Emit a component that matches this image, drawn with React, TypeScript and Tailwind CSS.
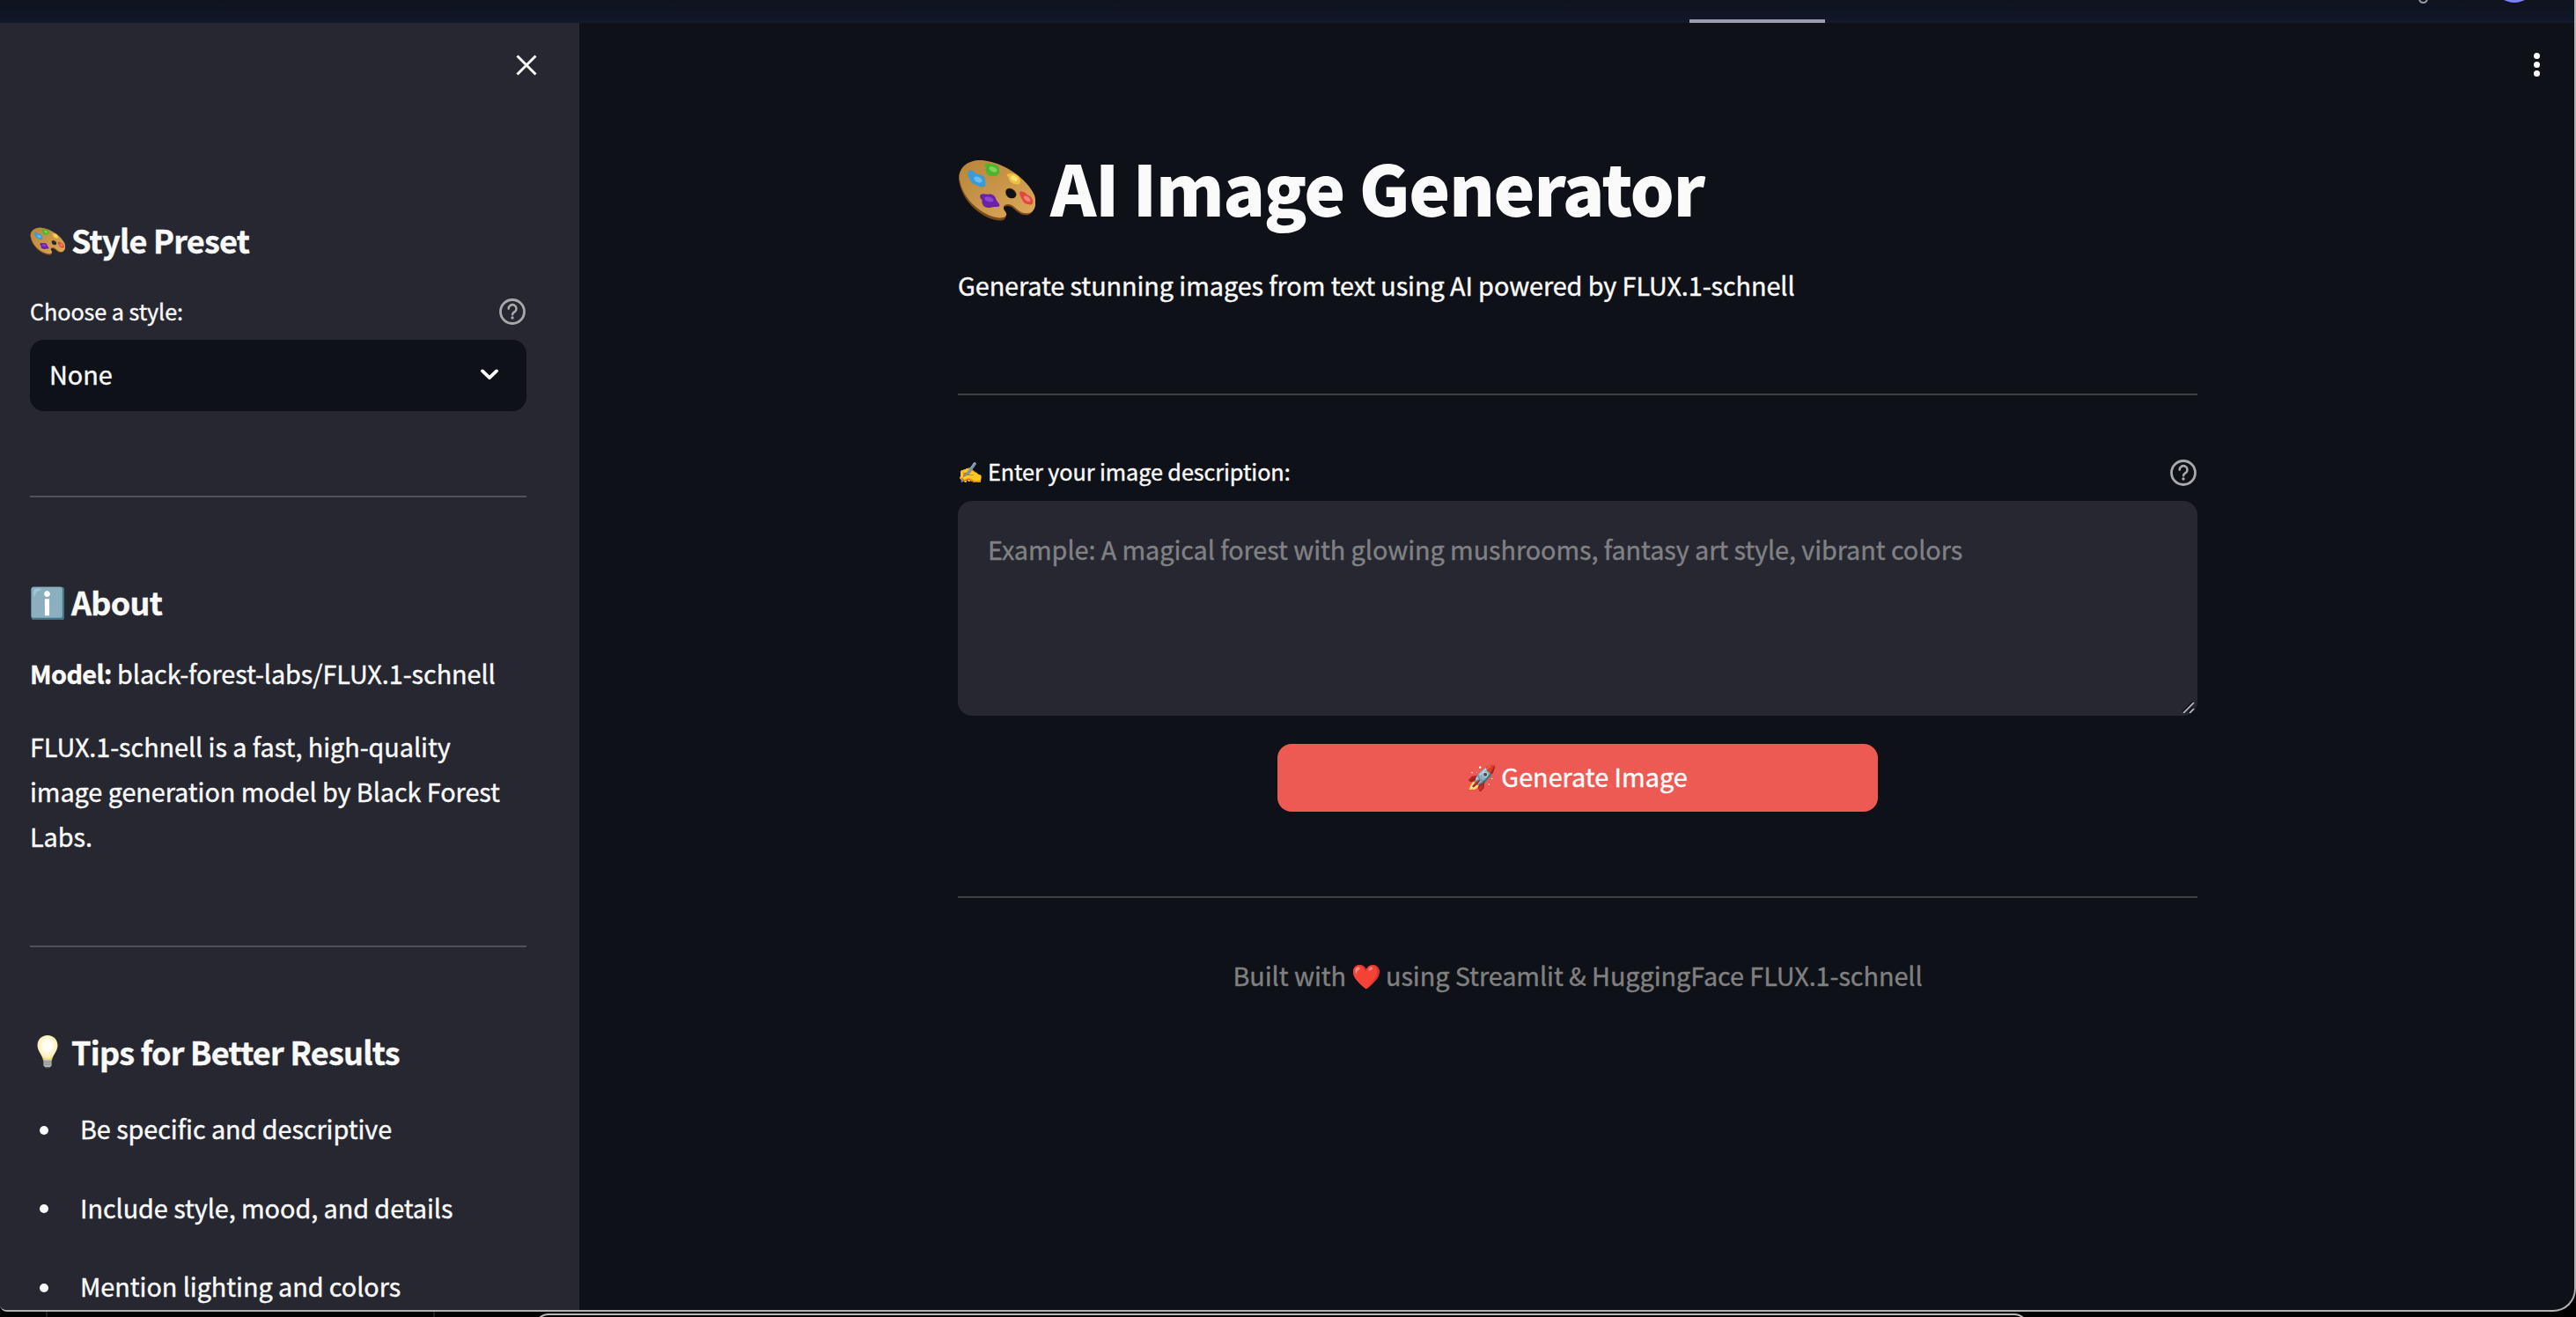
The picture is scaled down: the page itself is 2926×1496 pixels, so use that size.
import React from "react";

const tips = [
  "Be specific and descriptive",
  "Include style, mood, and details",
  "Mention lighting and colors",
];

const PaletteIcon: React.FC<{ className?: string }> = ({ className }) => (
  <svg viewBox="24 3 264 264" className={className} role="img" aria-label="🎨" stroke="none">
    <defs>
      <linearGradient id="wood" x1="0" y1="0" x2="1" y2="1">
        <stop offset="0" stopColor="#b98537" />
        <stop offset="0.5" stopColor="#c8954a" />
        <stop offset="1" stopColor="#e0ab5c" />
      </linearGradient>
    </defs>
    <path
      transform="translate(-2 6)"
      fill="#7a4a18"
      fillRule="evenodd"
      d="M30 100C22 58 62 28 112 34C182 42 258 95 281 152C293 186 283 214 258 214C228 214 217 183 196 183C176 183 176 198 187 211C195 224 184 236 162 232C108 226 42 170 30 100ZM190 136C190 150 200 157 210 157C222 157 226 148 223 140C219 130 209 124 202 124C193 124 190 129 190 136Z"
    />
    <path
      fill="url(#wood)"
      fillRule="evenodd"
      d="M30 100C22 58 62 28 112 34C182 42 258 95 285 152C295 186 285 214 258 214C228 214 217 183 196 183C176 183 176 198 187 209C195 222 184 232 162 229C108 222 42 170 30 100ZM186 140C186 156 198 163 209 163C222 163 226 152 223 144C219 134 209 128 200 128C191 128 186 133 186 140Z"
    />
    <path
      fill="#3b9ad8"
      d="M62 69C68 64 78 69 84 78C96 80 110 84 116 94C120 104 116 114 118 120C112 128 94 124 86 116C76 116 66 106 64 96C56 90 57 74 62 69Z"
    />
    <ellipse cx="93" cy="99" rx="15" ry="9" transform="rotate(25 93 99)" fill="#6cbcec" />
    <path
      fill="#4cb52c"
      d="M116 47C122 42 134 46 140 46C154 46 166 56 165 68C168 80 158 86 148 87C138 90 124 84 121 74C116 66 120 62 121 57C114 54 113 50 116 47Z"
    />
    <ellipse cx="144" cy="64" rx="14" ry="8" transform="rotate(25 144 64)" fill="#7bd655" />
    <path
      fill="#eec13b"
      d="M193 80C202 76 220 78 230 88C236 96 240 110 234 114C224 118 204 112 201 102C196 97 196 92 198 90C190 88 189 83 193 80Z"
    />
    <ellipse cx="216" cy="95" rx="13" ry="8" transform="rotate(30 216 95)" fill="#fbdf70" />
    <path
      fill="#e2483d"
      d="M236 140C244 138 254 142 258 149C268 152 280 162 280 174C281 184 274 186 262 183C252 182 244 172 242 164C236 156 232 144 236 140Z"
    />
    <ellipse cx="260" cy="164" rx="13" ry="7" transform="rotate(40 260 164)" fill="#f58476" />
    <path
      fill="#6c22a8"
      d="M101 151C108 144 120 150 128 149C140 146 152 154 154 166C158 176 168 182 166 189C160 194 150 190 142 193C130 198 112 194 108 182C104 176 108 172 106 168C100 164 97 156 101 151Z"
    />
    <ellipse cx="130" cy="166" rx="16" ry="8" transform="rotate(15 130 166)" fill="#8e45cc" />
  </svg>
);

const BulbIcon = () => (
  <svg viewBox="0 0 40 40" className="mt-0.5 h-10 w-10" role="img" aria-label="💡" stroke="none">
    <defs>
      <radialGradient id="glow" cx="0.5" cy="0.42" r="0.6">
        <stop offset="0.3" stopColor="#fffef6" />
        <stop offset="0.75" stopColor="#fbf0b8" />
        <stop offset="1" stopColor="#e8cc62" />
      </radialGradient>
    </defs>
    <path fill="url(#glow)" d="M20 1C26.8 1 31.5 6 31.5 12.6C31.5 19 26 23 25 29.5H15C14 23 8.5 19 8.5 12.6C8.5 6 13.2 1 20 1Z" />
    <path fill="#b4b4b4" d="M15.4 29H24.6V35.5L22.5 37.5H17.5L15.4 35.5Z" />
    <path stroke="#84868a" d="M15.4 31.3H24.6M15.4 34H24.6" />
    <path fill="#3a3a3d" d="M17.5 37.5H22.5L21.5 39H18.5Z" />
  </svg>
);

const HelpIcon = () => (
  <svg viewBox="0 0 30 30" fill="none" className="mt-0.5 h-[30px] w-[30px] text-[#a8a9ac]">
    <circle cx="15" cy="15" r="13.5" stroke="currentColor" strokeWidth="2.8" />
    <path
      d="M10.7 11.6a4.4 4.4 0 1 1 6.9 3.6c-1.6 1-2.5 1.6-2.5 3.1"
      stroke="currentColor"
      strokeWidth="2.6"
      strokeLinecap="round"
    />
    <circle cx="15" cy="22" r="1.7" fill="currentColor" />
  </svg>
);

const SidebarHeading: React.FC<{ icon: React.ReactNode; title: string }> = ({ icon, title }) => (
  <h3 className="flex h-12 items-center gap-[7px] text-[36px] leading-[48px] font-bold tracking-[-0.75px]">
    <span className="flex w-10 justify-center text-[34px] tracking-normal">{icon}</span>
    {title}
  </h3>
);

const Sidebar = () => (
  <aside className="h-full w-[658px] shrink-0 overflow-hidden bg-[#262730] pr-[60px] pl-[34px]">
    <div className="-mr-3 flex h-[222px] justify-end pt-9">
      <svg viewBox="0 0 24 24" className="h-6 w-6" stroke="#fafafa" strokeWidth="3">
        <path d="M1.5 1.5 22.5 22.5M22.5 1.5 1.5 22.5" />
      </svg>
    </div>

    <SidebarHeading icon={<PaletteIcon className="mt-1 h-10 w-10" />} title="Style Preset" />
    <div className="mt-9 flex h-[42px] items-center justify-between pr-px text-[25.2px] leading-[42px]">
      <span className="tracking-[-0.07px]">Choose a style:</span>
      <HelpIcon />
    </div>
    <div className="mt-3 flex h-[81px] items-center justify-between rounded-2xl bg-[#0e1117] pr-8 pb-[5px] pl-[22px]">
      <span>None</span>
      <svg viewBox="0 0 20 13" fill="none" className="mt-[3px] h-[13px] w-5" stroke="#fafafa" strokeWidth="3.8">
        <path d="M2 2.4 10 10.2 18 2.4" strokeLinecap="round" strokeLinejoin="round" />
      </svg>
    </div>

    <hr className="mt-24 border-t-2 border-[#505159]" />

    <div className="mt-[94px]">
      <SidebarHeading icon="ℹ️" title="About" />
    </div>
    <p className="mt-8 tracking-[-0.06px] whitespace-nowrap">
      <strong className="font-bold tracking-[-0.6px]">Model:</strong> black-forest-labs/FLUX.1-schnell
    </p>
    <p className="mt-8 tracking-[-0.06px] whitespace-nowrap">
      FLUX.1-schnell is a fast, high-quality
      <br />
      image generation model by Black Forest
      <br />
      Labs.
    </p>

    <hr className="mt-[99px] border-t-2 border-[#505159]" />

    <div className="mt-[94px]">
      <SidebarHeading icon={<BulbIcon />} title="Tips for Better Results" />
    </div>
    <ul className="mt-[38px] flex flex-col gap-[38.5px]">
      {tips.map((tip) => (
        <li key={tip} className="flex items-center pl-[11px] tracking-[-0.06px] whitespace-nowrap">
          <span className="mt-1 mr-9 h-2.5 w-2.5 rounded-full bg-[#fafafa]" />
          {tip}
        </li>
      ))}
    </ul>
  </aside>
);

const Main = () => (
  <main className="flex-1">
    <div className="flex h-[133px] justify-end pt-[34px] pr-[39px]">
      <div className="flex flex-col gap-[3px]">
        <span className="h-[7px] w-[7px] rounded-full bg-white" />
        <span className="h-[7px] w-[7px] rounded-full bg-white" />
        <span className="h-[7px] w-[7px] rounded-full bg-white" />
      </div>
    </div>

    <div className="ml-[430px] w-[1408px]">
      <h1 className="flex h-[106px] items-center gap-[17px] text-[79.2px] leading-[106px] font-black tracking-[-1.5px] [-webkit-text-stroke:0px]">
        <PaletteIcon className="mt-2 h-[88px] w-[88px]" />
        AI Image Generator
      </h1>
      <p className="mt-[33px] tracking-[-0.08px]">
        Generate stunning images from text using AI powered by FLUX.1-schnell
      </p>

      <hr className="mt-[98px] border-t-2 border-[#3d4044]" />

      <label className="mt-[65px] flex h-[42px] items-center pr-px text-[25.2px] leading-[42px]">
        <span className="mr-1.5 flex w-7 justify-center text-[23px]">✍️</span>
        <span className="tracking-[-0.07px]">Enter your image description:</span>
        <span className="mt-0.5 ml-auto">
          <HelpIcon />
        </span>
      </label>
      <div className="relative mt-[13px] h-[244px]">
        <textarea
          className="block h-full w-full resize-none rounded-2xl bg-[#262730] px-[34px] pt-[29px] tracking-[-0.07px] outline-none placeholder:text-[#808184]"
          placeholder="Example: A magical forest with glowing mushrooms, fantasy art style, vibrant colors"
        />
        <svg viewBox="0 0 14 14" className="absolute right-[3px] bottom-[3px] h-3.5 w-3.5" strokeWidth="1.6">
          <path d="M0 13 12.5 .5M6.5 13l6-6" stroke="#0e1117" />
          <path d="M1 14 13 2M8 14l5-5" stroke="#c4c4c8" />
        </svg>
      </div>

      <button className="mt-8 ml-[363px] flex h-[77px] w-[682px] items-center justify-center gap-[6px] rounded-2xl bg-[#ed5a53] pb-1 text-white">
        <span className="flex w-8 justify-center text-[27px]">🚀</span>
        <span>Generate Image</span>
      </button>

      <hr className="mt-24 border-t-2 border-[#3d4044]" />

      <p className="mt-[62px] flex justify-center tracking-[-0.06px] text-[#808080]">
        Built with
        <span className="mr-1.5 ml-[7px] flex w-8 justify-center text-[27px]">❤️</span>
        using Streamlit &amp; HuggingFace FLUX.1-schnell
      </p>
    </div>
  </main>
);

export default function App() {
  return (
    <div className="relative h-[1496px] w-[2926px] overflow-hidden bg-black font-['Noto_Sans_CJK_JP','Noto_Sans',sans-serif] text-[28.8px] leading-[51px] text-[#fafafa] [-webkit-text-stroke:0.4px]">
      <div className="h-[1490px] overflow-hidden rounded-br-[26px] rounded-bl-[8px] border-r-2 border-b-2 border-[#b2b2b5] bg-[#0e1117]">
        <header className="relative h-[26px] border-b-2 border-[#15192f] bg-linear-to-b from-[#0f131d] to-[#111729]">
          <span className="absolute top-[22px] left-[1919px] h-1 w-[154px] bg-[#9b9db0]" />
          <span className="absolute top-[-8px] left-[2747px] h-3 w-[11px] rounded-full border-2 border-[#9b9ca3]" />
          <span className="absolute top-[-47px] left-[2831px] h-[50px] w-[50px] rounded-full bg-[#7c83fa]" />
        </header>
        <div className="flex h-[1462px]">
          <Sidebar />
          <Main />
        </div>
      </div>

      {/* top edge of the window below */}
      <div className="absolute top-[1490px] left-[52px] h-1.5 w-[442px] border-x-2 border-[#1c1c1e]" />
      <div className="absolute top-[1492px] left-[607px] h-10 w-[1697px] rounded-t-[16px] border-2 border-[#b9b9b9] bg-black" />
    </div>
  );
}
